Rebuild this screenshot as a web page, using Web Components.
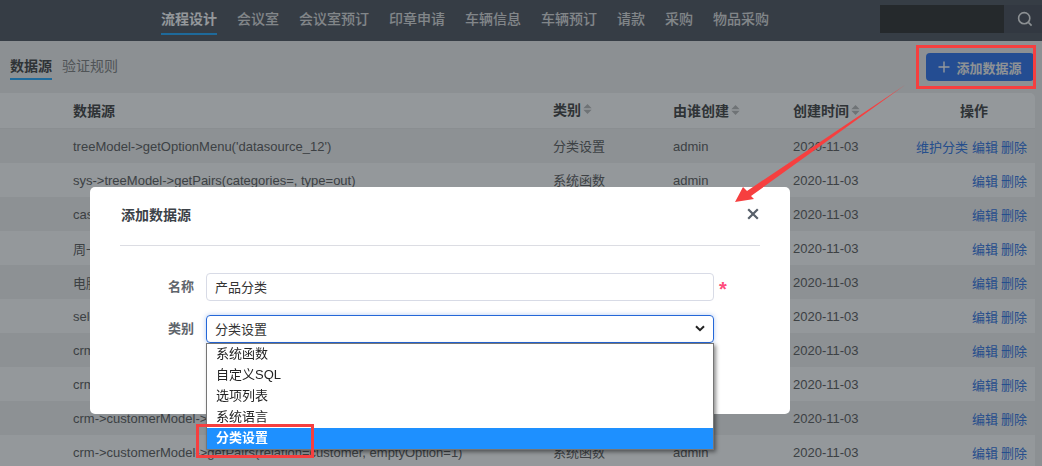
<!DOCTYPE html>
<html lang="zh">
<head>
<meta charset="utf-8">
<title>数据源</title>
<style>
  html, body { margin: 0; height: 466px; overflow: hidden; background: #f1f1f1; }
  body { font: 13px "Liberation Sans", "Noto Sans CJK SC", sans-serif; position: relative; }
</style>
</head>
<body>
<app-navbar></app-navbar>
<app-tabbar></app-tabbar>
<data-table></data-table>
<modal-backdrop></modal-backdrop>
<source-modal></source-modal>
<red-marks></red-marks>

<script>
// components

class AppNavbar extends HTMLElement {
    constructor() {
        super();
        this.attachShadow({ mode: 'open' });
    }

    connectedCallback() {
        const items = ['流程设计', '会议室', '会议室预订', '印章申请', '车辆信息', '车辆预订', '请款', '采购', '物品采购'];
        this.shadowRoot.innerHTML = `
        <style>
            :host { display: flex; height: 41px; background: #5d626c; position: relative; padding-left: 161px; box-sizing: border-box; }
            nav { display: flex; gap: 20px; }
            a { height: 41px; box-sizing: border-box; padding-top: 10px; font-size: 14px; line-height: 18px; font-weight: 500; color: #e0e0e0; position: relative; }
            a.active { font-weight: 700; color: #fff; }
            a.active::after { content: ''; position: absolute; left: 0; right: 0; top: 33px; height: 2px; background: #35b0ff; }
            .search { margin-left: auto; margin-top: 5px; display: flex; height: 28px; }
            .box { width: 124px; background: #404040; }
            .btn { width: 35px; padding-left: 3px; background: #565b64; display: flex; align-items: center; justify-content: center; }
        </style>
        <nav>
            ${items.map((t, i) => `<a class="${i === 0 ? 'active' : ''}">${t}</a>`).join('')}
        </nav>
        <div class="search">
            <div class="box"></div>
            <div class="btn">
                <svg width="16" height="16" viewBox="0 0 16 16" fill="none" stroke="#f2f2f2" stroke-width="1.6">
                    <circle cx="7.2" cy="7.2" r="5.6"/><path d="M11.4 11.4 14.6 14.6"/>
                </svg>
            </div>
        </div>`;
    }
}

class AppTabbar extends HTMLElement {
    constructor() {
        super();
        this.attachShadow({ mode: 'open' });
    }

    connectedCallback() {
        this.shadowRoot.innerHTML = `
        <style>
            :host { display: flex; height: 52px; box-sizing: border-box; padding: 12px 8px 0 10px; justify-content: space-between; }
            .tabs { display: flex; gap: 10px; }
            .tab { height: 27px; box-sizing: border-box; padding-top: 3px; font-size: 14px; line-height: 20px; color: #8a8a8a; }
            .tab.active { font-weight: 700; color: #515151; border-bottom: 2px solid #35b0ff; }
            button {
                width: 108px; height: 28px; border: 0; border-radius: 4px; background: #3e7ff0; color: #f4f4f4;
                font: 700 13px "Liberation Sans", "Noto Sans CJK SC", sans-serif; padding: 0;
                display: flex; align-items: center; justify-content: center; gap: 6px;
            }
        </style>
        <div class="tabs">
            <div class="tab active">数据源</div>
            <div class="tab">验证规则</div>
        </div>
        <button>
            <svg width="12" height="12" viewBox="0 0 12 12" stroke="#fff" stroke-width="1.4"><path d="M6 .5v11M.5 6h11"/></svg>
            添加数据源
        </button>`;
    }
}

class DataTable extends HTMLElement {
    constructor() {
        super();
        this.attachShadow({ mode: 'open' });
    }

    connectedCallback() {
        const rows = [
            ["treeModel->getOptionMenu('datasource_12')", '分类设置', true],
            ['sys->treeModel->getPairs(categories=, type=out)', '系统函数'],
            ['cascade', '系统函数'],
            ['周一', '选项列表'],
            ['电脑', '选项列表'],
            ['select', '自定义SQL'],
            ['crm', '系统函数'],
            ['crm', '系统函数'],
            ['crm->customerModel->', '系统函数'],
            ['crm->customerModel->getPairs(relation=customer, emptyOption=1)', '系统函数']
        ];
        const sort = `<svg width="9" height="10" viewBox="0 0 10 12" fill="#c0c0c0"><path d="M5 0 10 5H0zM5 12 0 7H10z"/></svg>`;
        this.shadowRoot.innerHTML = `
        <style>
            :host { display: block; width: 1035px; border-radius: 0 5px 0 0; overflow: hidden; color: #696969; }
            .row { display: grid; grid-template-columns: 553px 120px 120px 1fr auto; height: 34px; align-items: center; padding-right: 8px; background: #f3f3f3; }
            .row:nth-child(even) { background: #fff; }
            .row > :first-child { padding-left: 73px; white-space: nowrap; }
            .row > :nth-child(2) { padding-bottom: 1px; }
            .head { height: 36px; background: #fff !important; font-size: 14px; font-weight: 700; color: #515151; border-bottom: 1px solid #eeeeee; box-sizing: border-box; grid-template-columns: 553px 120px 120px 1fr auto; padding-right: 47px; padding-bottom: 2px; }
            .head span { display: flex; align-items: center; gap: 2px; }
            .ops a { color: #4180e6; margin-left: 3px; }
            .ops a.extra { margin-right: 1px; }
            .row div { white-space: nowrap; }
        </style>
        <div class="row head">
            <span>数据源</span>
            <span>类别${sort}</span>
            <span>由谁创建${sort}</span>
            <span>创建时间${sort}</span>
            <span>操作</span>
        </div>
        ${rows.map(r => `
        <div class="row">
            <div>${r[0]}</div>
            <div>${r[1]}</div>
            <div>admin</div>
            <div>2020-11-03</div>
            <div class="ops">${r[2] ? '<a class="extra">维护分类</a>' : ''}<a>编辑</a><a>删除</a></div>
        </div>`).join('')}`;
    }
}

class ModalBackdrop extends HTMLElement {
    constructor() {
        super();
        this.attachShadow({ mode: 'open' });
        this.shadowRoot.innerHTML = `<style>:host { display: block; position: fixed; inset: 0; background: rgba(0, 10, 17, .42); }</style>`;
    }
}

class SourceModal extends HTMLElement {
    constructor() {
        super();
        this.attachShadow({ mode: 'open' });
    }

    connectedCallback() {
        const options = ['系统函数', '自定义SQL', '选项列表', '系统语言', '分类设置'];
        this.shadowRoot.innerHTML = `
        <style>
            :host { display: block; position: absolute; left: 90px; top: 187px; width: 700px; height: 227px; background: #fff; border-radius: 5px; box-sizing: border-box; padding: 0 30px; color: #3c4248; }
            header { height: 59px; box-sizing: border-box; border-bottom: 1px solid #dcdde3; display: flex; align-items: center; justify-content: space-between; padding: 0 0 4px 1px; }
            h3 { margin: 0; font-size: 14px; font-weight: 700; color: #3c4248; }
            form { padding-top: 27px; display: grid; grid-template-columns: 74px 508px auto; column-gap: 12px; row-gap: 14px; align-items: center; }
            label { text-align: right; font-weight: 700; color: #5f656c; padding-bottom: 3px; }
            .input { height: 28px; box-sizing: border-box; border: 1px solid #d8dbe6; border-radius: 4px; padding: 0 8px 2px; display: flex; align-items: center; justify-content: space-between; color: #333; }
            .focus { border-color: #2467d8; box-shadow: 0 0 5px rgba(36, 103, 216, .35); padding-bottom: 1px; }
            .star { color: #ff4d7d; font-size: 20px; font-weight: 700; margin-left: -7px; line-height: 20px; padding-top: 4px; }
            .menu { position: absolute; left: 116px; top: 156px; width: 508px; box-sizing: border-box; border: 1px solid #767676; background: #fff; box-shadow: 2px 2px 4px rgba(0, 0, 0, .45); color: #222; }
            .menu div { height: 21px; line-height: 20px; padding-left: 9px; }
            .menu .sel { background: #1e90ff; color: #fff; font-weight: 700; }
        </style>
        <header>
            <h3>添加数据源</h3>
            <svg width="12" height="12" viewBox="0 0 12 12" stroke="#58606a" stroke-width="2.2" style="margin-right:1px"><path d="M1.2 1.2 10.8 10.8M10.8 1.2 1.2 10.8"/></svg>
        </header>
        <form>
            <label>名称</label>
            <div class="input">产品分类</div>
            <span class="star">*</span>
            <label>类别</label>
            <div class="input focus">分类设置
                <svg width="10" height="7" viewBox="0 0 10 7" fill="none" stroke="#222" stroke-width="2"><path d="M1 1.2 5 5.2 9 1.2"/></svg>
            </div>
        </form>
        <div class="menu">
            ${options.map((o, i) => `<div class="${i === 4 ? 'sel' : ''}">${o}</div>`).join('')}
        </div>`;
    }
}

// annotations drawn over the screenshot
class RedMarks extends HTMLElement {
    constructor() {
        super();
        this.attachShadow({ mode: 'open' });
        this.shadowRoot.innerHTML = `
        <style>:host { display: block; position: absolute; inset: 0; pointer-events: none; } svg { display: block; }</style>
        <svg width="1042" height="466" fill="none" stroke="#f63f3f" stroke-width="3">
            <rect x="917.5" y="46.5" width="117" height="41"/>
            <rect x="197.5" y="425.5" width="115" height="31"/>
            <path fill="#f63f3f" stroke="none" d="M735 202 743 187 747 191 905 85 751 196 754 199Z"/>
        </svg>`;
    }
}

customElements.define('app-navbar', AppNavbar);
customElements.define('app-tabbar', AppTabbar);
customElements.define('data-table', DataTable);
customElements.define('modal-backdrop', ModalBackdrop);
customElements.define('source-modal', SourceModal);
customElements.define('red-marks', RedMarks);
</script>
</body>
</html>
